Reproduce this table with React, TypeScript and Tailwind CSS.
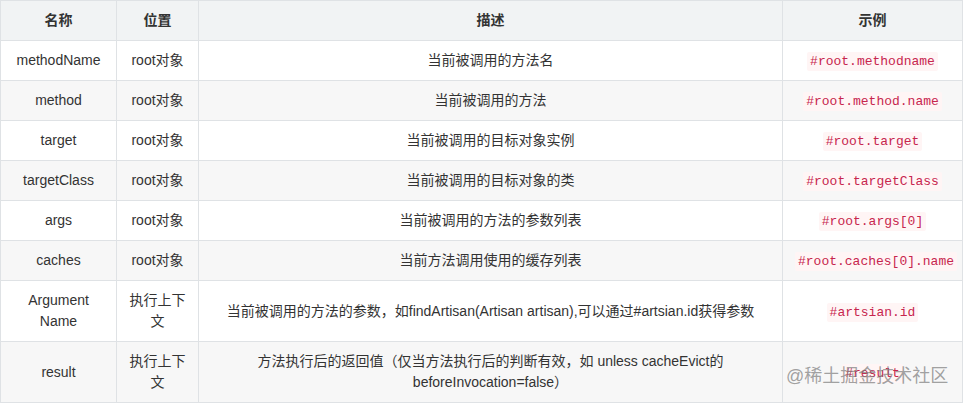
const rows: { name: string; pos: string; desc: string; example: string }[] = [
  { name: "methodName", pos: "root对象", desc: "当前被调用的方法名", example: "#root.methodname" },
  { name: "method", pos: "root对象", desc: "当前被调用的方法", example: "#root.method.name" },
  { name: "target", pos: "root对象", desc: "当前被调用的目标对象实例", example: "#root.target" },
  { name: "targetClass", pos: "root对象", desc: "当前被调用的目标对象的类", example: "#root.targetClass" },
  { name: "args", pos: "root对象", desc: "当前被调用的方法的参数列表", example: "#root.args[0]" },
  { name: "caches", pos: "root对象", desc: "当前方法调用使用的缓存列表", example: "#root.caches[0].name" },
  {
    name: "Argument Name",
    pos: "执行上下文",
    desc: "当前被调用的方法的参数，如findArtisan(Artisan artisan),可以通过#artsian.id获得参数",
    example: "#artsian.id",
  },
  {
    name: "result",
    pos: "执行上下文",
    desc: "方法执行后的返回值（仅当方法执行后的判断有效，如 unless cacheEvict的beforeInvocation=false）",
    example: "#result",
  },
];

const cell = "border border-[#dfe2e5] px-3 py-[9px] text-center align-middle";

export default function App() {
  return (
    <div
      className="relative w-[963px] h-[403px] bg-white text-[14px] leading-[21px] text-[#333]"
      style={{ fontFamily: '"Liberation Sans", "Noto Sans CJK SC", sans-serif' }}
    >
      <table className="w-[962px] table-fixed border-collapse">
        <colgroup>
          <col className="w-[116px]" />
          <col className="w-[82px]" />
          <col className="w-[584px]" />
          <col className="w-[180px]" />
        </colgroup>
        <thead>
          <tr className="bg-[#f1f3f4]">
            <th className={`${cell} font-bold`}>名称</th>
            <th className={`${cell} font-bold`}>位置</th>
            <th className={`${cell} font-bold`}>描述</th>
            <th className={`${cell} font-bold`}>示例</th>
          </tr>
        </thead>
        <tbody>
          {rows.map((r, i) => (
            <tr key={r.name} className={i % 2 === 1 ? "bg-[#f7f7f7]" : "bg-white"}>
              <td className={cell}>{r.name}</td>
              <td className={cell}>{r.pos}</td>
              <td className={cell}>{r.desc}</td>
              <td className={cell}>
                <code
                  className="rounded-[2px] bg-[#fff5f5] px-[3px] py-[2px] text-[13px] leading-[normal] text-[#c7254e]"
                  style={{ fontFamily: '"Liberation Mono", monospace' }}
                >
                  {r.example}
                </code>
              </td>
            </tr>
          ))}
        </tbody>
      </table>
      {/* watermark */}
      <div className="pointer-events-none absolute left-[786px] top-[362px] text-[18px] leading-[28px] text-[#7a7a7a]/70">
        @稀土掘金技术社区
      </div>
    </div>
  );
}
